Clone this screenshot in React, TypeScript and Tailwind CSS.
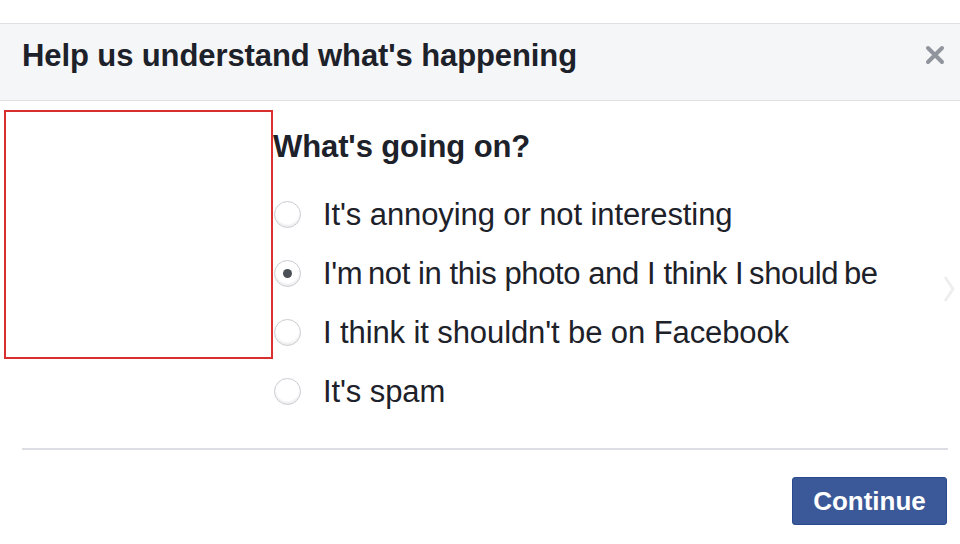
import React, { useState } from "react";

const options = [
  "It's annoying or not interesting",
  "I'm\u2009not in this photo and I think I\u2009should\u2009be",
  "I think it shouldn't be on Facebook",
  "It's spam",
];

const Radio = ({ checked }: { checked: boolean }) => (
  <span className="flex h-[27px] w-[27px] shrink-0 items-center justify-center rounded-full border border-[#c9ccd1] bg-white shadow-[inset_0_-2px_2px_rgba(0,0,0,0.08)]">
    {checked && <span className="h-[9px] w-[9px] rounded-full bg-[#4b4f56]" />}
  </span>
);

export default function App() {
  const [picked, setPicked] = useState(1);
  return (
    <div
      className="relative h-[544px] w-[960px] overflow-hidden bg-white text-[#1d2129]"
      style={{ fontFamily: "'Liberation Sans', Arial, sans-serif" }}
    >
      <div className="h-[23px]" />
      <div className="flex h-[78px] items-start justify-between border-t border-b border-[#dddfe2] bg-[#f5f6f7] pl-[22px] pr-[15px] pt-[14px]">
        <h2 className="text-[31px] font-bold leading-[36px] tracking-[-0.1px] text-[#1d2129]">
          Help us understand what's happening
        </h2>
        <svg width="20" height="20" viewBox="0 0 20 20" className="mt-[7px] text-[#90949c]">
          <path d="M3 3 L17 17 M17 3 L3 17" stroke="currentColor" strokeWidth="4" strokeLinecap="round" />
        </svg>
      </div>

      <div className="flex">
        <div className="ml-[4px] mt-[9px] h-[249px] w-[269px] border-2 border-[#d9302f]" />
        <div className="flex-1 pt-[28px]">
          <h3 className="text-[31px] font-bold leading-[36px] tracking-[-0.1px]">What's going on?</h3>
          <div className="mt-[20px] flex flex-col">
            {options.map((label, i) => (
              <label
                key={i}
                onClick={() => setPicked(i)}
                className="flex h-[59px] cursor-pointer items-center gap-[22px] pl-[1px]"
              >
                <Radio checked={picked === i} />
                <span
                  className={
                    i === 1
                      ? "text-[31px] leading-[34px] tracking-[-0.4px]"
                      : "text-[31px] leading-[34px] tracking-[-0.1px]"
                  }
                >
                  {label}
                </span>
              </label>
            ))}
          </div>
        </div>
      </div>

      <svg
        width="14"
        height="30"
        viewBox="0 0 14 30"
        className="absolute left-[942px] top-[274px] text-[#eeeeee]"
      >
        <path d="M3 3 L11 15 L3 27" fill="none" stroke="currentColor" strokeWidth="3" />
      </svg>

      <div className="absolute left-[22px] right-[12px] top-[448px] border-t-2 border-[#dcdee3]" />

      <div className="absolute right-[13px] top-[477px]">
        <button className="h-[48px] w-[155px] rounded-[3px] border border-[#294a8e] bg-[#3b5998] text-[26px] font-bold text-white">
          Continue
        </button>
      </div>
    </div>
  );
}
